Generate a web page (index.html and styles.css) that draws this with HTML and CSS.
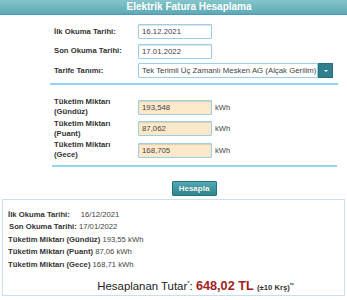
FILE: index.html
```html
<!DOCTYPE html>
<html lang="tr">
<head>
  <meta charset="UTF-8" />
  <meta name="viewport" content="width=device-width, initial-scale=1.0" />
  <title>Elektrik Fatura Hesaplama</title>
  <link rel="stylesheet" href="styles.css">
</head>
<body>

  <header class="title-bar">
    <h1>Elektrik Fatura Hesaplama</h1>
  </header>

  <form class="calc-form">
    <div class="row">
      <label>İlk Okuma Tarihi:</label>
      <input class="field" type="text" value="16.12.2021">
    </div>
    <div class="row">
      <label>Son Okuma Tarihi:</label>
      <input class="field" type="text" value="17.01.2022">
    </div>
    <div class="row">
      <label>Tarife Tanımı:</label>
      <div class="select">
        <span class="select-text">Tek Terimli Üç Zamanlı Mesken AG (Alçak Gerilim)</span>
        <span class="select-arrow"></span>
      </div>
    </div>

    <div class="divider first"></div>

    <div class="row usage">
      <label>Tüketim Miktarı<br>(Gündüz)</label>
      <input class="field amount" type="text" value="193,548">
      <span class="unit">kWh</span>
    </div>
    <div class="row usage">
      <label>Tüketim Miktarı<br>(Puant)</label>
      <input class="field amount" type="text" value="87,062">
      <span class="unit">kWh</span>
    </div>
    <div class="row usage">
      <label>Tüketim Miktarı<br>(Gece)</label>
      <input class="field amount" type="text" value="168,705">
      <span class="unit">kWh</span>
    </div>

    <div class="divider second"></div>

    <div class="actions">
      <button class="btn" type="button">Hesapla</button>
    </div>
  </form>

  <section class="result">
    <p><b>İlk Okuma Tarihi:</b><span class="gap-wide">16/12/2021</span></p>
    <p class="indent"><b>Son Okuma Tarihi:</b> 17/01/2022</p>
    <p><b>Tüketim Miktarı (Gündüz)</b> 193,55 kWh</p>
    <p><b>Tüketim Miktarı (Puant)</b> 87,06 kWh</p>
    <p><b>Tüketim Miktarı (Gece)</b> 168,71 kWh</p>
    <p class="total">Hesaplanan Tutar<sup>*</sup>: <strong>648,02 TL</strong> <small>(±10 Krş)<sup>**</sup></small></p>
  </section>

</body>
</html>
```

FILE: styles.css
```css
/* RESET */
* {
  margin: 0;
  padding: 0;
  box-sizing: border-box;
}

body {
  font-family: "Liberation Sans", Arial, sans-serif;
  font-size: 7.7px;
  color: #333;
  background: #fff;
  width: 347px;
  height: 300px;
  overflow: hidden;
}

/* HEADER */
.title-bar {
  height: 15px;
  background: linear-gradient(#84c5cb, #5eaab2);
  border-bottom: 1px solid #4d95c4;
  padding-left: 31px;
  text-align: center;
}
.title-bar h1 {
  font-size: 10px;
  line-height: 14px;
  color: #fff;
  font-weight: bold;
}

/* FORM */
.calc-form {
  margin-left: 50px;
  width: 288px;
  padding-top: 9px;
}
.row {
  display: flex;
  align-items: center;
  height: 15px;
  margin-bottom: 4.5px;
}
.row label {
  width: 88px;
  padding-left: 4px;
  font-weight: bold;
  line-height: 10px;
}
.field {
  width: 74px;
  height: 15px;
  padding: 0 3px;
  border: 1px solid #9ccfe6;
  border-radius: 1px;
  box-shadow: inset 0 1px 1px rgba(0,0,0,0.12);
  font-family: inherit;
  font-size: 7.8px;
  color: #444;
  background: #fff;
  outline: none;
}
.field.amount {
  background: #fde9c9;
}
.unit {
  margin-left: 3px;
  color: #444;
}

.select {
  display: flex;
  height: 15px;
}
.select-text {
  width: 180px;
  height: 15px;
  padding: 0 0 0 3px;
  line-height: 13px;
  border: 1px solid #9ccfe6;
  border-radius: 1px;
  font-size: 7.8px;
  color: #444;
  white-space: nowrap;
  overflow: hidden;
}
.select-arrow {
  width: 15px;
  height: 15px;
  background: #2f808c;
  border: 1px solid #27717c;
  position: relative;
}
.select-arrow::after {
  content: "";
  position: absolute;
  left: 5px;
  top: 6px;
  border-left: 2px solid transparent;
  border-right: 2px solid transparent;
  border-top: 2px solid #fff;
}

.divider {
  height: 2px;
  background: #8fd4f0;
}
.divider.first {
  margin-top: 5px;
  margin-bottom: 12px;
}
.divider.second {
  margin-top: 5px;
  width: 285px;
  margin-left: 2px;
}

.row.usage {
  height: 20px;
  margin-bottom: 1.5px;
}

.actions {
  text-align: center;
  padding-top: 14px;
}
.btn {
  width: 45px;
  height: 15px;
  background: linear-gradient(#53a9b1, #2e8690);
  border: 1px solid #25727c;
  border-radius: 1px;
  color: #fff;
  font-family: inherit;
  font-size: 8px;
  font-weight: bold;
  text-shadow: 0 0 1px rgba(0,0,0,0.4);
}

/* RESULT */
.result {
  margin: 3px 2px 0;
  height: 97px;
  border: 1px solid #cadfee;
  padding: 9px 5px 0;
}
.result p {
  line-height: 12.4px;
  color: #444;
}
.result p b {
  color: #333;
}
.result .indent {
  padding-left: 1px;
}
.gap-wide {
  margin-left: 11px;
}
.result .total {
  margin-top: 3px;
  line-height: 18px;
  padding-left: 44px;
  text-align: center;
  font-size: 11.4px;
  color: #222;
}
.total sup {
  font-size: 6px;
  vertical-align: 5px;
}
.total strong {
  font-size: 12.7px;
  color: #a41d1d;
}
.total small {
  font-size: 7.7px;
  font-weight: bold;
  color: #333;
}
.total small sup {
  font-size: 5px;
  vertical-align: 3px;
}
```
